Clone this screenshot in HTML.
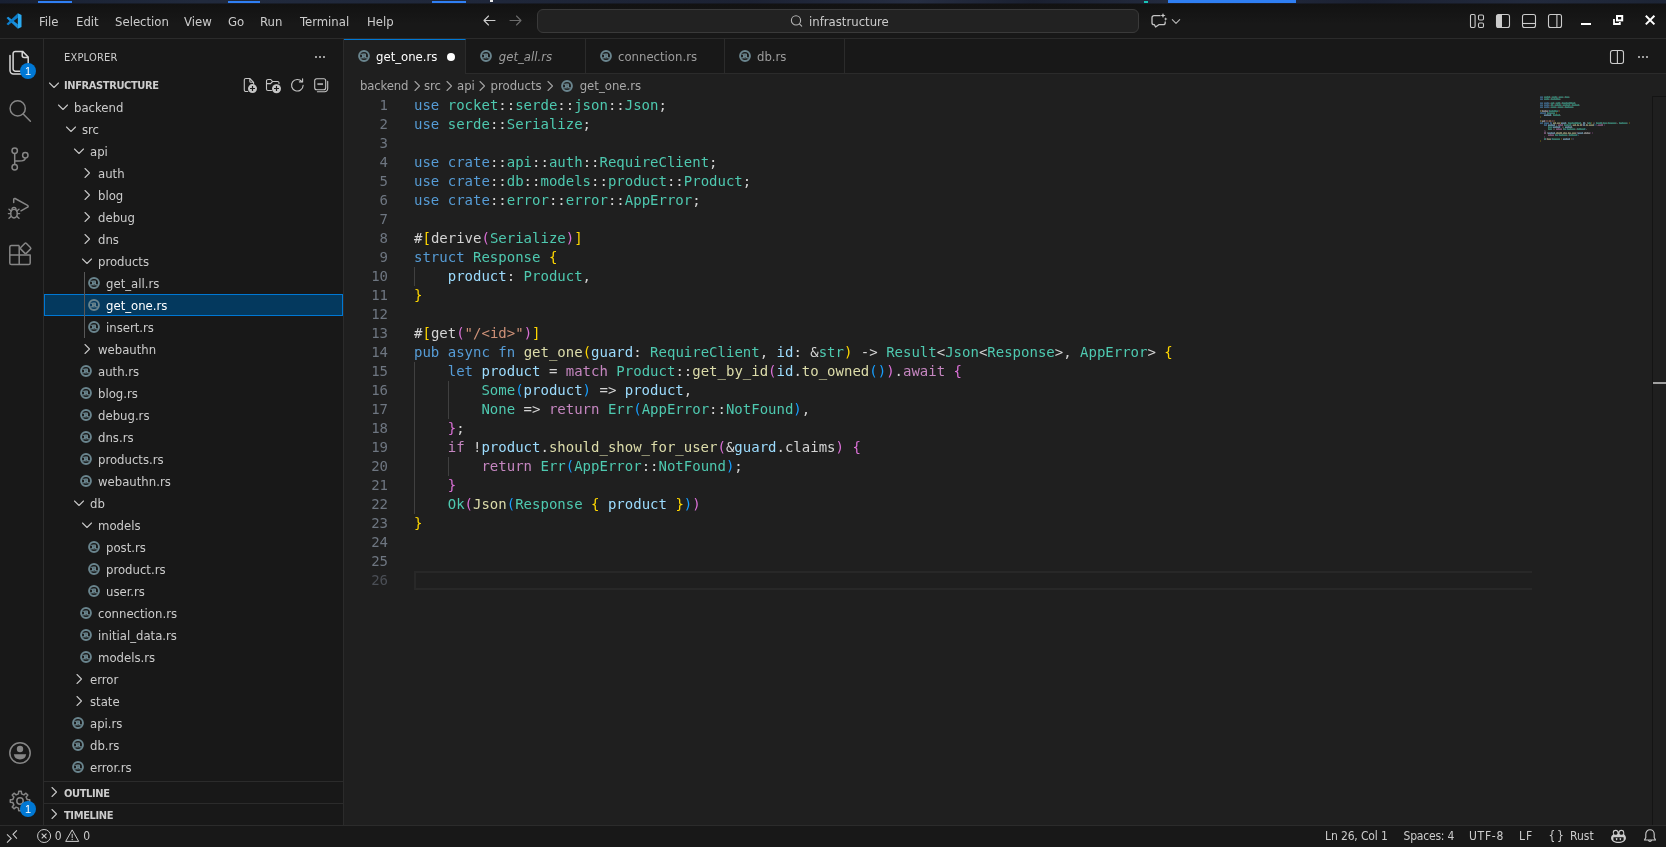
<!DOCTYPE html><html lang="en"><head><meta charset="utf-8"><title>get_one.rs - infrastructure - Visual Studio Code</title><style>
*{box-sizing:border-box;margin:0;padding:0}
html,body{width:1666px;height:847px;overflow:hidden;background:#181818}
body{position:relative;will-change:transform;font-family:"DejaVu Sans Condensed","Liberation Sans",sans-serif;font-size:13px;color:#cccccc;-webkit-font-smoothing:antialiased}
.abs{position:absolute}
svg{display:block;overflow:visible;fill:none}
#desk{left:0;top:0;width:1666px;height:4px;background:linear-gradient(180deg,rgba(0,0,0,0) 0,rgba(0,0,0,0) 2.6px,rgba(16,16,18,.75) 4px),linear-gradient(90deg,#182032,#212a3d 12%,#1f273a 30%,#1c2233 45%,#262e42 55%,#1a2030 62%,#252d41 72%,#1b2132 82%,#222a3d 92%,#1d2536)}
#desk i{position:absolute;top:1px;height:2px;background:#2f7ff3}
#title{left:0;top:4px;width:1666px;height:35px;background:linear-gradient(#121212,#181818 20px);border-bottom:1px solid #2b2b2b}
.menu{position:absolute;top:0;height:36px;line-height:36px;color:#cccccc;font-size:13px;white-space:pre}
#cc{left:537px;top:5px;width:602px;height:24px;border:1px solid #3a3a3a;border-radius:6px;background:#222222}
#act{left:0;top:39px;width:44px;height:786px;background:#181818;border-right:1px solid #2b2b2b}
#side{left:44px;top:39px;width:300px;height:786px;background:#181818;border-right:1px solid #2b2b2b}
#ed{left:344px;top:39px;width:1322px;height:786px;background:#1f1f1f}
#tabs{left:0;top:0;width:1322px;height:35px;background:#181818;border-bottom:1px solid #2b2b2b}
.tab{position:absolute;top:0;height:34px;border-right:1px solid #2b2b2b;background:#181818;color:#9d9d9d;line-height:35px;white-space:pre}
.tab.on{background:#1f1f1f;color:#ffffff;border-top:1px solid #0078d4;height:35px;line-height:33px}
.tab span{position:absolute;top:0}
#status{left:0;top:825px;width:1666px;height:22px;background:#181818;border-top:1px solid #2b2b2b;font-size:12px;color:#cccccc}
#status span{position:absolute;top:0;line-height:20px;white-space:pre}
.row{position:absolute;left:0;width:299px;height:22px;line-height:22px;white-space:pre;color:#cccccc}
.row span{position:absolute;top:1px}
.hdr{font-size:11px;font-weight:700;color:#cccccc;letter-spacing:-.38px}
.ln{position:absolute;left:0;width:44px;text-align:right;font-family:"DejaVu Sans Mono","Liberation Mono",monospace;font-size:14px;line-height:19px;color:#6e7681;height:19px}
.cl{position:absolute;left:70px;font-family:"DejaVu Sans Mono","Liberation Mono",monospace;font-size:14px;line-height:19px;height:19px;white-space:pre;color:#d4d4d4}
.k{color:#569cd6}.c{color:#c586c0}.t{color:#4ec9b0}.f{color:#dcdcaa}.v{color:#9cdcfe}.s{color:#ce9178}
.b1{color:#ffd700}.b2{color:#da70d6}.b3{color:#179fff}
.ig{position:absolute;width:1px;background:#404040}
.bc{position:absolute;top:36px;left:0;height:22px;line-height:22px;color:#a9a9a9;white-space:pre}
.bc span{position:absolute;top:0}
</style></head><body>
<div id="desk" class="abs"><i style="left:38px;width:34px"></i><i style="left:228px;width:32px"></i><i style="left:432px;width:34px"></i><i style="left:1168px;width:128px;top:0;height:3px"></i><i style="left:1144px;width:4px;background:#19c5b5"></i><i style="left:490px;width:3px;top:0;background:#e8e8e8"></i></div>
<div id="title" class="abs"><svg class="abs" style="left:6px;top:9px" width="16" height="16" viewBox="0 0 100 100"><path d="M74 98 L74 70 L14 24 L3 32 Z" fill="#1a8fdc"/><path d="M74 2 L74 30 L14 76 L3 68 Z" fill="#0d7ecb"/><path d="M74 2 L97 13 V87 L74 98 Z" fill="#2aabf2"/></svg><span class="menu" style="left:39px">File</span><span class="menu" style="left:76px">Edit</span><span class="menu" style="left:115px">Selection</span><span class="menu" style="left:184px">View</span><span class="menu" style="left:228px">Go</span><span class="menu" style="left:260px">Run</span><span class="menu" style="left:300px">Terminal</span><span class="menu" style="left:367px">Help</span><svg class="abs" style="left:481px;top:9px" width="16" height="16" viewBox="0 0 16 16"><path d="M14 7.5 H3.5 M7.5 3 L3 7.5 L7.5 12" stroke="#cccccc" stroke-width="1.1" stroke-linecap="round" stroke-linejoin="round"/></svg><svg class="abs" style="left:507px;top:9px" width="16" height="16" viewBox="0 0 16 16"><path d="M3 7.5 H13.5 M9.5 3 L14 7.5 L9.5 12" stroke="#6b6b6b" stroke-width="1.1" stroke-linecap="round" stroke-linejoin="round"/></svg><div id="cc" class="abs"><svg class="abs" style="left:251px;top:3px" width="16" height="16" viewBox="0 0 16 16"><circle cx="7" cy="7.4" r="4.6" stroke="#b4b4b4" stroke-width="1.1"/><path d="M10.4 10.8 L12.7 13.1" stroke="#b4b4b4" stroke-width="1.1" stroke-linecap="round"/></svg><span class="abs" style="left:271px;top:1px;line-height:22px;color:#cccccc;white-space:pre">infrastructure</span></div><svg class="abs" style="left:1150px;top:8px" width="18" height="18" viewBox="0 0 18 18"><path d="M10 3.7 H4 a2 2 0 0 0 -2 2 V10.7 a2 2 0 0 0 2 2 H4.4 L5.6 15 L8.8 12.7 H13.2 a2 2 0 0 0 2 -2 V10" stroke="#c4c4c4" stroke-width="1.3" stroke-linejoin="round" stroke-linecap="round"/><path d="M13 1 L13.7 2.8 L15.5 3.5 L13.7 4.2 L13 6 L12.3 4.2 L10.5 3.5 L12.3 2.8 Z" fill="#cccccc"/><path d="M15.7 5.3 L16.2 6.6 L17.5 7.1 L16.2 7.6 L15.7 8.9 L15.2 7.6 L13.9 7.1 L15.2 6.6 Z" fill="#cccccc"/></svg><svg class="abs" style="left:1170px;top:12px" width="12" height="12" viewBox="0 0 12 12"><path d="M2.3 3.7 L6 7.3 L9.7 3.7" stroke="#b8b8b8" stroke-width="1.1" stroke-linecap="round" stroke-linejoin="round"/></svg><svg class="abs" style="left:1469px;top:9px" width="16" height="16" viewBox="0 0 16 16"><rect x="1.5" y="1.5" width="4.6" height="13" rx="1.2" stroke="#cccccc" stroke-width="1.1"/><rect x="9.5" y="2" width="5" height="5" rx="1.2" stroke="#cccccc" stroke-width="1.1"/><rect x="9.5" y="10" width="5" height="4.5" rx="1.2" stroke="#cccccc" stroke-width="1.1"/></svg><svg class="abs" style="left:1495px;top:9px" width="16" height="16" viewBox="0 0 16 16"><rect x="1.5" y="1.5" width="13" height="13" rx="2" stroke="#cccccc" stroke-width="1.1"/><path d="M1.5 3.5 a2 2 0 0 1 2 -2 H7 V14.5 H3.5 A2 2 0 0 1 1.5 12.5 Z" fill="#cccccc"/></svg><svg class="abs" style="left:1521px;top:9px" width="16" height="16" viewBox="0 0 16 16"><rect x="1.5" y="1.5" width="13" height="13" rx="2" stroke="#cccccc" stroke-width="1.1"/><path d="M1.5 10.5 H14.5" stroke="#cccccc" stroke-width="1.1"/></svg><svg class="abs" style="left:1547px;top:9px" width="16" height="16" viewBox="0 0 16 16"><rect x="1.5" y="1.5" width="13" height="13" rx="2" stroke="#cccccc" stroke-width="1.1"/><path d="M9.9 1.5 V14.5" stroke="#cccccc" stroke-width="1.1"/></svg><div class="abs" style="left:1581px;top:19px;width:10px;height:2px;background:#ffffff"></div><svg class="abs" style="left:1612px;top:10px" width="12" height="12" viewBox="0 0 12 12"><rect x="5" y="2" width="5.2" height="4.4" stroke="#ffffff" stroke-width="2"/><path d="M2 5 V10 H7.8 V8" stroke="#ffffff" stroke-width="1.8"/></svg><svg class="abs" style="left:1644px;top:10px" width="12" height="12" viewBox="0 0 12 12"><path d="M1.8 1.8 L10.4 10.4 M10.4 1.8 L1.8 10.4" stroke="#ffffff" stroke-width="2"/></svg></div>
<div id="act" class="abs"><svg class="abs" style="left:8px;top:11px" width="24" height="26" viewBox="0 0 24 26"><path d="M7.3 1.4 H14.6 L20.2 7 V19 a2.2 2.2 0 0 1 -2.2 2.2 H7.3 a2.2 2.2 0 0 1 -2.2 -2.2 V3.6 a2.2 2.2 0 0 1 2.2 -2.2 Z M14.2 1.6 V5.4 a2 2 0 0 0 2 2 H20" stroke="#d7d7d7" stroke-width="1.5" stroke-linejoin="round"/><path d="M2 5.4 V20.6 a3.4 3.4 0 0 0 3.4 3.4 H15" stroke="#d7d7d7" stroke-width="1.5" stroke-linecap="round"/></svg><div class="abs" style="left:20px;top:24px;width:16px;height:16px;border-radius:8px;background:#0078d4;color:#fff;font-family:'Liberation Sans',sans-serif;font-size:11px;text-align:center;line-height:16px">1</div><svg class="abs" style="left:8px;top:60px" width="24" height="24" viewBox="0 0 24 24"><circle cx="9.7" cy="9.4" r="7.6" stroke="#868686" stroke-width="1.5"/><path d="M15.2 15 L22.4 22.2" stroke="#868686" stroke-width="1.5" stroke-linecap="round"/></svg><svg class="abs" style="left:8px;top:108px" width="24" height="24" viewBox="0 0 24 24"><circle cx="6.7" cy="3.8" r="2.7" stroke="#868686" stroke-width="1.5"/><circle cx="6.7" cy="20.2" r="2.7" stroke="#868686" stroke-width="1.5"/><circle cx="17.3" cy="8.2" r="2.7" stroke="#868686" stroke-width="1.5"/><path d="M6.7 6.5 V17.5 M17.3 10.9 C17.3 14 14 14 11 14 H6.7" stroke="#868686" stroke-width="1.5"/></svg><svg class="abs" style="left:4px;top:154px" width="28" height="28" viewBox="0 0 28 28"><path d="M9.7 9.6 V6.4 a1 1 0 0 1 1.4 -0.9 L23.6 12.4 a1 1 0 0 1 0 1.8 L17 17.8" stroke="#868686" stroke-width="1.5" stroke-linecap="round" stroke-linejoin="round"/><ellipse cx="10" cy="20.6" rx="3.3" ry="4.3" stroke="#868686" stroke-width="1.5"/><path d="M8 16.4 a2 2 0 0 1 4 0 M6.7 20.6 H4.4 M13.3 20.6 H15.6 M7.2 18 L5 16.2 M12.8 18 L15 16.2 M7.2 23.4 L5 25.2 M12.8 23.4 L15 25.2" stroke="#868686" stroke-width="1.4" stroke-linecap="round"/></svg><svg class="abs" style="left:8px;top:203px" width="24" height="24" viewBox="0 0 24 24"><path d="M11.2 3.5 H3.4 a1.6 1.6 0 0 0 -1.6 1.6 V21 a1.6 1.6 0 0 0 1.6 1.6 H20.6 a1.6 1.6 0 0 0 1.6 -1.6 V13 H1.8 M11.2 3.5 V22.6" stroke="#868686" stroke-width="1.5" stroke-linejoin="round"/><rect x="13.6" y="2.3" width="8" height="8" rx="1.2" transform="rotate(45 17.6 6.3)" stroke="#868686" stroke-width="1.5"/></svg><svg class="abs" style="left:8px;top:702px" width="24" height="24" viewBox="0 0 24 24"><circle cx="12" cy="12" r="10.2" stroke="#868686" stroke-width="1.5"/><circle cx="12" cy="8" r="3.2" fill="#868686"/><path d="M5.8 13.2 H18.2 a6.3 6.3 0 0 1 -12.4 0 Z" fill="#868686"/></svg><svg class="abs" style="left:8px;top:750px" width="24" height="24" viewBox="0 0 24 24"><path d="M19.12 10.41 L21.71 10.70 L21.71 13.30 L19.12 13.59 L18.16 15.91 L19.79 17.95 L17.95 19.79 L15.91 18.16 L13.59 19.12 L13.30 21.71 L10.70 21.71 L10.41 19.12 L8.09 18.16 L6.05 19.79 L4.21 17.95 L5.84 15.91 L4.88 13.59 L2.29 13.30 L2.29 10.70 L4.88 10.41 L5.84 8.09 L4.21 6.05 L6.05 4.21 L8.09 5.84 L10.41 4.88 L10.70 2.29 L13.30 2.29 L13.59 4.88 L15.91 5.84 L17.95 4.21 L19.79 6.05 L18.16 8.09 Z" stroke="#868686" stroke-width="1.5" stroke-linejoin="round"/><circle cx="12" cy="12" r="3.2" stroke="#868686" stroke-width="1.5"/></svg><div class="abs" style="left:20px;top:762px;width:16px;height:16px;border-radius:8px;background:#0078d4;color:#fff;font-family:'Liberation Sans',sans-serif;font-size:11px;text-align:center;line-height:16px">1</div></div>
<div id="side" class="abs"><span class="abs" style="left:20px;top:1px;line-height:35px;font-size:11px;letter-spacing:.2px;color:#cccccc;white-space:pre">EXPLORER</span><svg class="abs" style="left:268px;top:10px" width="16" height="16" viewBox="0 0 16 16"><circle cx="4" cy="8" r="1" fill="#cccccc"/><circle cx="8" cy="8" r="1" fill="#cccccc"/><circle cx="12" cy="8" r="1" fill="#cccccc"/></svg><div class="row hdr" style="top:35px"><svg class="abs" style="left:2px;top:3px" width="16" height="16" viewBox="0 0 16 16"><path d="M3.5 6 L8 10.5 L12.5 6" fill="none" stroke="#c5c5c5" stroke-width="1.1" stroke-linecap="round" stroke-linejoin="round"/></svg><span style="left:20px">INFRASTRUCTURE</span><svg class="abs" style="left:198px;top:3px" width="16" height="16" viewBox="0 0 16 16"><path d="M5.8 14.5 H3.8 a1.5 1.5 0 0 1 -1.5 -1.5 V3 A1.5 1.5 0 0 1 3.8 1.5 H7.8 L11.6 5.3 V6.6 M7.8 1.8 V4.3 a1 1 0 0 0 1 1 H11.4" stroke="#c5c5c5" stroke-width="1.1" stroke-linejoin="round" stroke-linecap="round"/><circle cx="10.5" cy="11.6" r="4.5" fill="#c5c5c5"/><path d="M10.5 9 V14 M8 11.5 H13" stroke="#181818" stroke-width="1.2"/></svg><svg class="abs" style="left:221px;top:3px" width="16" height="16" viewBox="0 0 16 16"><path d="M6.5 13.5 H3 a1.5 1.5 0 0 1 -1.5 -1.5 V4 A1.5 1.5 0 0 1 3 2.5 H5.8 L7.6 4.5 H12.5 A1.5 1.5 0 0 1 14 6 V6.6 M1.5 6.6 H5.6 L7.6 4.5" stroke="#c5c5c5" stroke-width="1.1" stroke-linejoin="round" stroke-linecap="round"/><circle cx="11.5" cy="11.7" r="4.5" fill="#c5c5c5"/><path d="M11.5 9 V14 M9 11.5 H14" stroke="#181818" stroke-width="1.2"/></svg><svg class="abs" style="left:245px;top:3px" width="16" height="16" viewBox="0 0 16 16"><path d="M12.9 4.7 A5.8 5.8 0 1 0 14.1 8.4" stroke="#c5c5c5" stroke-width="1.1" stroke-linecap="round"/><path d="M13.6 1.7 V4.9 H10.4" stroke="#c5c5c5" stroke-width="1.1" stroke-linecap="round" stroke-linejoin="round"/></svg><svg class="abs" style="left:269px;top:3px" width="16" height="16" viewBox="0 0 16 16"><rect x="1.7" y="1.7" width="11" height="11" rx="2" stroke="#c5c5c5" stroke-width="1.1"/><path d="M4.4 7.1 H10" stroke="#a0a0a0" stroke-width="1.9"/><path d="M14.7 4.4 V11.7 a3 3 0 0 1 -3 3 H4.4" stroke="#c5c5c5" stroke-width="1.1" stroke-linecap="round"/></svg></div><div class="row" style="top:57px"><svg class="abs" style="left:11px;top:3px" width="16" height="16" viewBox="0 0 16 16"><path d="M3.5 6 L8 10.5 L12.5 6" fill="none" stroke="#c5c5c5" stroke-width="1.1" stroke-linecap="round" stroke-linejoin="round"/></svg><span style="left:30px">backend</span></div><div class="row" style="top:79px"><svg class="abs" style="left:19px;top:3px" width="16" height="16" viewBox="0 0 16 16"><path d="M3.5 6 L8 10.5 L12.5 6" fill="none" stroke="#c5c5c5" stroke-width="1.1" stroke-linecap="round" stroke-linejoin="round"/></svg><span style="left:38px">src</span></div><div class="row" style="top:101px"><svg class="abs" style="left:27px;top:3px" width="16" height="16" viewBox="0 0 16 16"><path d="M3.5 6 L8 10.5 L12.5 6" fill="none" stroke="#c5c5c5" stroke-width="1.1" stroke-linecap="round" stroke-linejoin="round"/></svg><span style="left:46px">api</span></div><div class="row" style="top:123px"><svg class="abs" style="left:35px;top:3px" width="16" height="16" viewBox="0 0 16 16"><path d="M6 3.5 L10.5 8 L6 12.5" fill="none" stroke="#c5c5c5" stroke-width="1.1" stroke-linecap="round" stroke-linejoin="round"/></svg><span style="left:54px">auth</span></div><div class="row" style="top:145px"><svg class="abs" style="left:35px;top:3px" width="16" height="16" viewBox="0 0 16 16"><path d="M6 3.5 L10.5 8 L6 12.5" fill="none" stroke="#c5c5c5" stroke-width="1.1" stroke-linecap="round" stroke-linejoin="round"/></svg><span style="left:54px">blog</span></div><div class="row" style="top:167px"><svg class="abs" style="left:35px;top:3px" width="16" height="16" viewBox="0 0 16 16"><path d="M6 3.5 L10.5 8 L6 12.5" fill="none" stroke="#c5c5c5" stroke-width="1.1" stroke-linecap="round" stroke-linejoin="round"/></svg><span style="left:54px">debug</span></div><div class="row" style="top:189px"><svg class="abs" style="left:35px;top:3px" width="16" height="16" viewBox="0 0 16 16"><path d="M6 3.5 L10.5 8 L6 12.5" fill="none" stroke="#c5c5c5" stroke-width="1.1" stroke-linecap="round" stroke-linejoin="round"/></svg><span style="left:54px">dns</span></div><div class="row" style="top:211px"><svg class="abs" style="left:35px;top:3px" width="16" height="16" viewBox="0 0 16 16"><path d="M3.5 6 L8 10.5 L12.5 6" fill="none" stroke="#c5c5c5" stroke-width="1.1" stroke-linecap="round" stroke-linejoin="round"/></svg><span style="left:54px">products</span></div><div class="row" style="top:233px"><svg class="abs" style="left:43px;top:4px" width="14" height="14" viewBox="0 0 14 14"><circle cx="7" cy="7" r="4.95" fill="none" stroke="#6a858e" stroke-width="1.9"/><path d="M3.2 8.9 H5 M9 8.9 H10.8 M3.4 5.2 H5" stroke="#6a858e" stroke-width="1.1"/><rect x="5" y="4.5" width="4" height="4.9" rx=".9" fill="#6a858e"/><path d="M7.2 9.5 V8.1 M6.6 6.1 H7.4" stroke="#181818" stroke-width=".8" opacity=".85"/></svg><span style="left:62px">get_all.rs</span></div><div class="row" style="top:255px;background:#04395e;outline:1px solid #0078d4;outline-offset:-1px;color:#ffffff"><svg class="abs" style="left:43px;top:4px" width="14" height="14" viewBox="0 0 14 14"><circle cx="7" cy="7" r="4.95" fill="none" stroke="#6a858e" stroke-width="1.9"/><path d="M3.2 8.9 H5 M9 8.9 H10.8 M3.4 5.2 H5" stroke="#6a858e" stroke-width="1.1"/><rect x="5" y="4.5" width="4" height="4.9" rx=".9" fill="#6a858e"/><path d="M7.2 9.5 V8.1 M6.6 6.1 H7.4" stroke="#04395e" stroke-width=".8" opacity=".85"/></svg><span style="left:62px">get_one.rs</span></div><div class="row" style="top:277px"><svg class="abs" style="left:43px;top:4px" width="14" height="14" viewBox="0 0 14 14"><circle cx="7" cy="7" r="4.95" fill="none" stroke="#6a858e" stroke-width="1.9"/><path d="M3.2 8.9 H5 M9 8.9 H10.8 M3.4 5.2 H5" stroke="#6a858e" stroke-width="1.1"/><rect x="5" y="4.5" width="4" height="4.9" rx=".9" fill="#6a858e"/><path d="M7.2 9.5 V8.1 M6.6 6.1 H7.4" stroke="#181818" stroke-width=".8" opacity=".85"/></svg><span style="left:62px">insert.rs</span></div><div class="row" style="top:299px"><svg class="abs" style="left:35px;top:3px" width="16" height="16" viewBox="0 0 16 16"><path d="M6 3.5 L10.5 8 L6 12.5" fill="none" stroke="#c5c5c5" stroke-width="1.1" stroke-linecap="round" stroke-linejoin="round"/></svg><span style="left:54px">webauthn</span></div><div class="row" style="top:321px"><svg class="abs" style="left:35px;top:4px" width="14" height="14" viewBox="0 0 14 14"><circle cx="7" cy="7" r="4.95" fill="none" stroke="#6a858e" stroke-width="1.9"/><path d="M3.2 8.9 H5 M9 8.9 H10.8 M3.4 5.2 H5" stroke="#6a858e" stroke-width="1.1"/><rect x="5" y="4.5" width="4" height="4.9" rx=".9" fill="#6a858e"/><path d="M7.2 9.5 V8.1 M6.6 6.1 H7.4" stroke="#181818" stroke-width=".8" opacity=".85"/></svg><span style="left:54px">auth.rs</span></div><div class="row" style="top:343px"><svg class="abs" style="left:35px;top:4px" width="14" height="14" viewBox="0 0 14 14"><circle cx="7" cy="7" r="4.95" fill="none" stroke="#6a858e" stroke-width="1.9"/><path d="M3.2 8.9 H5 M9 8.9 H10.8 M3.4 5.2 H5" stroke="#6a858e" stroke-width="1.1"/><rect x="5" y="4.5" width="4" height="4.9" rx=".9" fill="#6a858e"/><path d="M7.2 9.5 V8.1 M6.6 6.1 H7.4" stroke="#181818" stroke-width=".8" opacity=".85"/></svg><span style="left:54px">blog.rs</span></div><div class="row" style="top:365px"><svg class="abs" style="left:35px;top:4px" width="14" height="14" viewBox="0 0 14 14"><circle cx="7" cy="7" r="4.95" fill="none" stroke="#6a858e" stroke-width="1.9"/><path d="M3.2 8.9 H5 M9 8.9 H10.8 M3.4 5.2 H5" stroke="#6a858e" stroke-width="1.1"/><rect x="5" y="4.5" width="4" height="4.9" rx=".9" fill="#6a858e"/><path d="M7.2 9.5 V8.1 M6.6 6.1 H7.4" stroke="#181818" stroke-width=".8" opacity=".85"/></svg><span style="left:54px">debug.rs</span></div><div class="row" style="top:387px"><svg class="abs" style="left:35px;top:4px" width="14" height="14" viewBox="0 0 14 14"><circle cx="7" cy="7" r="4.95" fill="none" stroke="#6a858e" stroke-width="1.9"/><path d="M3.2 8.9 H5 M9 8.9 H10.8 M3.4 5.2 H5" stroke="#6a858e" stroke-width="1.1"/><rect x="5" y="4.5" width="4" height="4.9" rx=".9" fill="#6a858e"/><path d="M7.2 9.5 V8.1 M6.6 6.1 H7.4" stroke="#181818" stroke-width=".8" opacity=".85"/></svg><span style="left:54px">dns.rs</span></div><div class="row" style="top:409px"><svg class="abs" style="left:35px;top:4px" width="14" height="14" viewBox="0 0 14 14"><circle cx="7" cy="7" r="4.95" fill="none" stroke="#6a858e" stroke-width="1.9"/><path d="M3.2 8.9 H5 M9 8.9 H10.8 M3.4 5.2 H5" stroke="#6a858e" stroke-width="1.1"/><rect x="5" y="4.5" width="4" height="4.9" rx=".9" fill="#6a858e"/><path d="M7.2 9.5 V8.1 M6.6 6.1 H7.4" stroke="#181818" stroke-width=".8" opacity=".85"/></svg><span style="left:54px">products.rs</span></div><div class="row" style="top:431px"><svg class="abs" style="left:35px;top:4px" width="14" height="14" viewBox="0 0 14 14"><circle cx="7" cy="7" r="4.95" fill="none" stroke="#6a858e" stroke-width="1.9"/><path d="M3.2 8.9 H5 M9 8.9 H10.8 M3.4 5.2 H5" stroke="#6a858e" stroke-width="1.1"/><rect x="5" y="4.5" width="4" height="4.9" rx=".9" fill="#6a858e"/><path d="M7.2 9.5 V8.1 M6.6 6.1 H7.4" stroke="#181818" stroke-width=".8" opacity=".85"/></svg><span style="left:54px">webauthn.rs</span></div><div class="row" style="top:453px"><svg class="abs" style="left:27px;top:3px" width="16" height="16" viewBox="0 0 16 16"><path d="M3.5 6 L8 10.5 L12.5 6" fill="none" stroke="#c5c5c5" stroke-width="1.1" stroke-linecap="round" stroke-linejoin="round"/></svg><span style="left:46px">db</span></div><div class="row" style="top:475px"><svg class="abs" style="left:35px;top:3px" width="16" height="16" viewBox="0 0 16 16"><path d="M3.5 6 L8 10.5 L12.5 6" fill="none" stroke="#c5c5c5" stroke-width="1.1" stroke-linecap="round" stroke-linejoin="round"/></svg><span style="left:54px">models</span></div><div class="row" style="top:497px"><svg class="abs" style="left:43px;top:4px" width="14" height="14" viewBox="0 0 14 14"><circle cx="7" cy="7" r="4.95" fill="none" stroke="#6a858e" stroke-width="1.9"/><path d="M3.2 8.9 H5 M9 8.9 H10.8 M3.4 5.2 H5" stroke="#6a858e" stroke-width="1.1"/><rect x="5" y="4.5" width="4" height="4.9" rx=".9" fill="#6a858e"/><path d="M7.2 9.5 V8.1 M6.6 6.1 H7.4" stroke="#181818" stroke-width=".8" opacity=".85"/></svg><span style="left:62px">post.rs</span></div><div class="row" style="top:519px"><svg class="abs" style="left:43px;top:4px" width="14" height="14" viewBox="0 0 14 14"><circle cx="7" cy="7" r="4.95" fill="none" stroke="#6a858e" stroke-width="1.9"/><path d="M3.2 8.9 H5 M9 8.9 H10.8 M3.4 5.2 H5" stroke="#6a858e" stroke-width="1.1"/><rect x="5" y="4.5" width="4" height="4.9" rx=".9" fill="#6a858e"/><path d="M7.2 9.5 V8.1 M6.6 6.1 H7.4" stroke="#181818" stroke-width=".8" opacity=".85"/></svg><span style="left:62px">product.rs</span></div><div class="row" style="top:541px"><svg class="abs" style="left:43px;top:4px" width="14" height="14" viewBox="0 0 14 14"><circle cx="7" cy="7" r="4.95" fill="none" stroke="#6a858e" stroke-width="1.9"/><path d="M3.2 8.9 H5 M9 8.9 H10.8 M3.4 5.2 H5" stroke="#6a858e" stroke-width="1.1"/><rect x="5" y="4.5" width="4" height="4.9" rx=".9" fill="#6a858e"/><path d="M7.2 9.5 V8.1 M6.6 6.1 H7.4" stroke="#181818" stroke-width=".8" opacity=".85"/></svg><span style="left:62px">user.rs</span></div><div class="row" style="top:563px"><svg class="abs" style="left:35px;top:4px" width="14" height="14" viewBox="0 0 14 14"><circle cx="7" cy="7" r="4.95" fill="none" stroke="#6a858e" stroke-width="1.9"/><path d="M3.2 8.9 H5 M9 8.9 H10.8 M3.4 5.2 H5" stroke="#6a858e" stroke-width="1.1"/><rect x="5" y="4.5" width="4" height="4.9" rx=".9" fill="#6a858e"/><path d="M7.2 9.5 V8.1 M6.6 6.1 H7.4" stroke="#181818" stroke-width=".8" opacity=".85"/></svg><span style="left:54px">connection.rs</span></div><div class="row" style="top:585px"><svg class="abs" style="left:35px;top:4px" width="14" height="14" viewBox="0 0 14 14"><circle cx="7" cy="7" r="4.95" fill="none" stroke="#6a858e" stroke-width="1.9"/><path d="M3.2 8.9 H5 M9 8.9 H10.8 M3.4 5.2 H5" stroke="#6a858e" stroke-width="1.1"/><rect x="5" y="4.5" width="4" height="4.9" rx=".9" fill="#6a858e"/><path d="M7.2 9.5 V8.1 M6.6 6.1 H7.4" stroke="#181818" stroke-width=".8" opacity=".85"/></svg><span style="left:54px">initial_data.rs</span></div><div class="row" style="top:607px"><svg class="abs" style="left:35px;top:4px" width="14" height="14" viewBox="0 0 14 14"><circle cx="7" cy="7" r="4.95" fill="none" stroke="#6a858e" stroke-width="1.9"/><path d="M3.2 8.9 H5 M9 8.9 H10.8 M3.4 5.2 H5" stroke="#6a858e" stroke-width="1.1"/><rect x="5" y="4.5" width="4" height="4.9" rx=".9" fill="#6a858e"/><path d="M7.2 9.5 V8.1 M6.6 6.1 H7.4" stroke="#181818" stroke-width=".8" opacity=".85"/></svg><span style="left:54px">models.rs</span></div><div class="row" style="top:629px"><svg class="abs" style="left:27px;top:3px" width="16" height="16" viewBox="0 0 16 16"><path d="M6 3.5 L10.5 8 L6 12.5" fill="none" stroke="#c5c5c5" stroke-width="1.1" stroke-linecap="round" stroke-linejoin="round"/></svg><span style="left:46px">error</span></div><div class="row" style="top:651px"><svg class="abs" style="left:27px;top:3px" width="16" height="16" viewBox="0 0 16 16"><path d="M6 3.5 L10.5 8 L6 12.5" fill="none" stroke="#c5c5c5" stroke-width="1.1" stroke-linecap="round" stroke-linejoin="round"/></svg><span style="left:46px">state</span></div><div class="row" style="top:673px"><svg class="abs" style="left:27px;top:4px" width="14" height="14" viewBox="0 0 14 14"><circle cx="7" cy="7" r="4.95" fill="none" stroke="#6a858e" stroke-width="1.9"/><path d="M3.2 8.9 H5 M9 8.9 H10.8 M3.4 5.2 H5" stroke="#6a858e" stroke-width="1.1"/><rect x="5" y="4.5" width="4" height="4.9" rx=".9" fill="#6a858e"/><path d="M7.2 9.5 V8.1 M6.6 6.1 H7.4" stroke="#181818" stroke-width=".8" opacity=".85"/></svg><span style="left:46px">api.rs</span></div><div class="row" style="top:695px"><svg class="abs" style="left:27px;top:4px" width="14" height="14" viewBox="0 0 14 14"><circle cx="7" cy="7" r="4.95" fill="none" stroke="#6a858e" stroke-width="1.9"/><path d="M3.2 8.9 H5 M9 8.9 H10.8 M3.4 5.2 H5" stroke="#6a858e" stroke-width="1.1"/><rect x="5" y="4.5" width="4" height="4.9" rx=".9" fill="#6a858e"/><path d="M7.2 9.5 V8.1 M6.6 6.1 H7.4" stroke="#181818" stroke-width=".8" opacity=".85"/></svg><span style="left:46px">db.rs</span></div><div class="row" style="top:717px"><svg class="abs" style="left:27px;top:4px" width="14" height="14" viewBox="0 0 14 14"><circle cx="7" cy="7" r="4.95" fill="none" stroke="#6a858e" stroke-width="1.9"/><path d="M3.2 8.9 H5 M9 8.9 H10.8 M3.4 5.2 H5" stroke="#6a858e" stroke-width="1.1"/><rect x="5" y="4.5" width="4" height="4.9" rx=".9" fill="#6a858e"/><path d="M7.2 9.5 V8.1 M6.6 6.1 H7.4" stroke="#181818" stroke-width=".8" opacity=".85"/></svg><span style="left:46px">error.rs</span></div><div class="abs" style="left:40px;top:233px;width:1px;height:66px;background:#585858"></div><div class="row hdr" style="top:742px;border-top:1px solid #2b2b2b"><svg class="abs" style="left:2px;top:2px" width="16" height="16" viewBox="0 0 16 16"><path d="M6 3.5 L10.5 8 L6 12.5" fill="none" stroke="#c5c5c5" stroke-width="1.1" stroke-linecap="round" stroke-linejoin="round"/></svg><span style="left:20px;top:1px">OUTLINE</span></div><div class="row hdr" style="top:764px;border-top:1px solid #2b2b2b"><svg class="abs" style="left:2px;top:2px" width="16" height="16" viewBox="0 0 16 16"><path d="M6 3.5 L10.5 8 L6 12.5" fill="none" stroke="#c5c5c5" stroke-width="1.1" stroke-linecap="round" stroke-linejoin="round"/></svg><span style="left:20px;top:1px">TIMELINE</span></div></div>
<div id="ed" class="abs"><div id="tabs" class="abs"></div><div class="tab on" style="left:0px;width:122px"><svg class="abs" style="left:12.5px;top:9px" width="14" height="14" viewBox="0 0 14 14"><circle cx="7" cy="7" r="4.95" fill="none" stroke="#6a858e" stroke-width="1.9"/><path d="M3.2 8.9 H5 M9 8.9 H10.8 M3.4 5.2 H5" stroke="#6a858e" stroke-width="1.1"/><rect x="5" y="4.5" width="4" height="4.9" rx=".9" fill="#6a858e"/><path d="M7.2 9.5 V8.1 M6.6 6.1 H7.4" stroke="#1f1f1f" stroke-width=".8" opacity=".85"/></svg><span style="left:32px;">get_one.rs</span><div class="abs" style="left:103px;top:13px;width:8px;height:8px;border-radius:4px;background:#ffffff"></div></div><div class="tab" style="left:122px;width:120px"><svg class="abs" style="left:12.5px;top:10px" width="14" height="14" viewBox="0 0 14 14"><circle cx="7" cy="7" r="4.95" fill="none" stroke="#6a858e" stroke-width="1.9"/><path d="M3.2 8.9 H5 M9 8.9 H10.8 M3.4 5.2 H5" stroke="#6a858e" stroke-width="1.1"/><rect x="5" y="4.5" width="4" height="4.9" rx=".9" fill="#6a858e"/><path d="M7.2 9.5 V8.1 M6.6 6.1 H7.4" stroke="#181818" stroke-width=".8" opacity=".85"/></svg><span style="left:32.8px;font-style:italic;">get_all.rs</span></div><div class="tab" style="left:242px;width:139px"><svg class="abs" style="left:12.5px;top:10px" width="14" height="14" viewBox="0 0 14 14"><circle cx="7" cy="7" r="4.95" fill="none" stroke="#6a858e" stroke-width="1.9"/><path d="M3.2 8.9 H5 M9 8.9 H10.8 M3.4 5.2 H5" stroke="#6a858e" stroke-width="1.1"/><rect x="5" y="4.5" width="4" height="4.9" rx=".9" fill="#6a858e"/><path d="M7.2 9.5 V8.1 M6.6 6.1 H7.4" stroke="#181818" stroke-width=".8" opacity=".85"/></svg><span style="left:32px;">connection.rs</span></div><div class="tab" style="left:381px;width:120px"><svg class="abs" style="left:12.5px;top:10px" width="14" height="14" viewBox="0 0 14 14"><circle cx="7" cy="7" r="4.95" fill="none" stroke="#6a858e" stroke-width="1.9"/><path d="M3.2 8.9 H5 M9 8.9 H10.8 M3.4 5.2 H5" stroke="#6a858e" stroke-width="1.1"/><rect x="5" y="4.5" width="4" height="4.9" rx=".9" fill="#6a858e"/><path d="M7.2 9.5 V8.1 M6.6 6.1 H7.4" stroke="#181818" stroke-width=".8" opacity=".85"/></svg><span style="left:32px;">db.rs</span></div><svg class="abs" style="left:1265px;top:10px" width="16" height="16" viewBox="0 0 16 16"><rect x="1.5" y="1.5" width="13" height="13" rx="2.2" stroke="#cccccc" stroke-width="1.1"/><path d="M8.4 1.5 V14.5" stroke="#cccccc" stroke-width="1.1"/></svg><svg class="abs" style="left:1291px;top:10px" width="16" height="16" viewBox="0 0 16 16"><circle cx="4" cy="8" r="1" fill="#cccccc"/><circle cx="8" cy="8" r="1" fill="#cccccc"/><circle cx="12" cy="8" r="1" fill="#cccccc"/></svg><div class="bc"><span style="left:16px;letter-spacing:-0.15px">backend</span><span style="left:80px;letter-spacing:0px">src</span><span style="left:113px;letter-spacing:0px">api</span><span style="left:146.6px;letter-spacing:0px">products</span><svg class="abs" style="left:64.5px;top:3px" width="16" height="16" viewBox="0 0 16 16"><path d="M6 3.5 L10.5 8 L6 12.5" fill="none" stroke="#a0a0a0" stroke-width="1.1" stroke-linecap="round" stroke-linejoin="round"/></svg><svg class="abs" style="left:96.8px;top:3px" width="16" height="16" viewBox="0 0 16 16"><path d="M6 3.5 L10.5 8 L6 12.5" fill="none" stroke="#a0a0a0" stroke-width="1.1" stroke-linecap="round" stroke-linejoin="round"/></svg><svg class="abs" style="left:130.3px;top:3px" width="16" height="16" viewBox="0 0 16 16"><path d="M6 3.5 L10.5 8 L6 12.5" fill="none" stroke="#a0a0a0" stroke-width="1.1" stroke-linecap="round" stroke-linejoin="round"/></svg><svg class="abs" style="left:197.6px;top:3px" width="16" height="16" viewBox="0 0 16 16"><path d="M6 3.5 L10.5 8 L6 12.5" fill="none" stroke="#a0a0a0" stroke-width="1.1" stroke-linecap="round" stroke-linejoin="round"/></svg><svg class="abs" style="left:216.4px;top:4px" width="14" height="14" viewBox="0 0 14 14"><circle cx="7" cy="7" r="4.95" fill="none" stroke="#6a858e" stroke-width="1.9"/><path d="M3.2 8.9 H5 M9 8.9 H10.8 M3.4 5.2 H5" stroke="#6a858e" stroke-width="1.1"/><rect x="5" y="4.5" width="4" height="4.9" rx=".9" fill="#6a858e"/><path d="M7.2 9.5 V8.1 M6.6 6.1 H7.4" stroke="#1f1f1f" stroke-width=".8" opacity=".85"/></svg><span style="left:235.7px">get_one.rs</span></div><div class="abs" style="left:70px;top:532px;width:1118px;height:19px;border:2px solid #282828;border-right:none"></div><div class="ln" style="top:57px">1</div><div class="cl" style="top:57px"><span class="k">use</span> <span class="t">rocket</span>::<span class="t">serde</span>::<span class="t">json</span>::<span class="t">Json</span>;</div><div class="ln" style="top:76px">2</div><div class="cl" style="top:76px"><span class="k">use</span> <span class="t">serde</span>::<span class="t">Serialize</span>;</div><div class="ln" style="top:95px">3</div><div class="ln" style="top:114px">4</div><div class="cl" style="top:114px"><span class="k">use</span> <span class="k">crate</span>::<span class="t">api</span>::<span class="t">auth</span>::<span class="t">RequireClient</span>;</div><div class="ln" style="top:133px">5</div><div class="cl" style="top:133px"><span class="k">use</span> <span class="k">crate</span>::<span class="t">db</span>::<span class="t">models</span>::<span class="t">product</span>::<span class="t">Product</span>;</div><div class="ln" style="top:152px">6</div><div class="cl" style="top:152px"><span class="k">use</span> <span class="k">crate</span>::<span class="t">error</span>::<span class="t">error</span>::<span class="t">AppError</span>;</div><div class="ln" style="top:171px">7</div><div class="ln" style="top:190px">8</div><div class="cl" style="top:190px">#<span class="b1">[</span>derive<span class="b2">(</span><span class="t">Serialize</span><span class="b2">)</span><span class="b1">]</span></div><div class="ln" style="top:209px">9</div><div class="cl" style="top:209px"><span class="k">struct</span> <span class="t">Response</span> <span class="b1">{</span></div><div class="ln" style="top:228px">10</div><div class="cl" style="top:228px">    <span class="v">product</span>: <span class="t">Product</span>,</div><div class="ln" style="top:247px">11</div><div class="cl" style="top:247px"><span class="b1">}</span></div><div class="ln" style="top:266px">12</div><div class="ln" style="top:285px">13</div><div class="cl" style="top:285px">#<span class="b1">[</span>get<span class="b2">(</span><span class="s">"/&lt;id&gt;"</span><span class="b2">)</span><span class="b1">]</span></div><div class="ln" style="top:304px">14</div><div class="cl" style="top:304px"><span class="k">pub</span> <span class="k">async</span> <span class="k">fn</span> <span class="f">get_one</span><span class="b1">(</span><span class="v">guard</span>: <span class="t">RequireClient</span>, <span class="v">id</span>: &amp;<span class="t">str</span><span class="b1">)</span> -&gt; <span class="t">Result</span>&lt;<span class="t">Json</span>&lt;<span class="t">Response</span>&gt;, <span class="t">AppError</span>&gt; <span class="b1">{</span></div><div class="ln" style="top:323px">15</div><div class="cl" style="top:323px">    <span class="k">let</span> <span class="v">product</span> = <span class="c">match</span> <span class="t">Product</span>::<span class="f">get_by_id</span><span class="b2">(</span><span class="v">id</span>.<span class="f">to_owned</span><span class="b3">(</span><span class="b3">)</span><span class="b2">)</span>.<span class="c">await</span> <span class="b2">{</span></div><div class="ln" style="top:342px">16</div><div class="cl" style="top:342px">        <span class="t">Some</span><span class="b3">(</span><span class="v">product</span><span class="b3">)</span> =&gt; <span class="v">product</span>,</div><div class="ln" style="top:361px">17</div><div class="cl" style="top:361px">        <span class="t">None</span> =&gt; <span class="c">return</span> <span class="t">Err</span><span class="b3">(</span><span class="t">AppError</span>::<span class="t">NotFound</span><span class="b3">)</span>,</div><div class="ln" style="top:380px">18</div><div class="cl" style="top:380px">    <span class="b2">}</span>;</div><div class="ln" style="top:399px">19</div><div class="cl" style="top:399px">    <span class="c">if</span> !<span class="v">product</span>.<span class="f">should_show_for_user</span><span class="b2">(</span>&amp;<span class="v">guard</span>.claims<span class="b2">)</span> <span class="b2">{</span></div><div class="ln" style="top:418px">20</div><div class="cl" style="top:418px">        <span class="c">return</span> <span class="t">Err</span><span class="b3">(</span><span class="t">AppError</span>::<span class="t">NotFound</span><span class="b3">)</span>;</div><div class="ln" style="top:437px">21</div><div class="cl" style="top:437px">    <span class="b2">}</span></div><div class="ln" style="top:456px">22</div><div class="cl" style="top:456px">    <span class="t">Ok</span><span class="b2">(</span><span class="f">Json</span><span class="b3">(</span><span class="t">Response</span> <span class="b1">{</span> <span class="v">product</span> <span class="b1">}</span><span class="b3">)</span><span class="b2">)</span></div><div class="ln" style="top:475px">23</div><div class="cl" style="top:475px"><span class="b1">}</span></div><div class="ln" style="top:494px">24</div><div class="ln" style="top:513px">25</div><div class="ln" style="top:532px;color:#4b4f56">26</div><div class="ig" style="left:70px;top:228px;height:19px;background:#404040"></div><div class="ig" style="left:70px;top:323px;height:152px;background:#404040"></div><div class="ig" style="left:104px;top:342px;height:38px;background:#404040"></div><div class="ig" style="left:104px;top:418px;height:19px;background:#404040"></div><svg class="abs" style="left:1196px;top:57px" width="112" height="60" viewBox="0 0 112 60" shape-rendering="crispEdges"><path d="M0 0.5h3M0 2.5h3M0 6.5h3M4 6.5h3M8 6.5h1M0 8.5h3M4 8.5h3M8 8.5h1M0 10.5h3M4 10.5h3M8 10.5h1M0 16.5h1M2 16.5h3M0 26.5h2M4 26.5h5M11 26.5h1M5 28.5h1" stroke="#569cd6" stroke-opacity="0.3" stroke-width="1"/><path d="M0 1.5h3M0 3.5h3M0 7.5h3M4 7.5h5M0 9.5h3M4 9.5h5M0 11.5h3M4 11.5h5M0 17.5h6M1 27.5h2M4 27.5h2M7 27.5h2M10 27.5h2M4 29.5h3" stroke="#569cd6" stroke-opacity="0.5" stroke-width="1"/><path d="M4 0.5h3M8 0.5h1M12 0.5h3M16 0.5h1M19 0.5h4M26 0.5h3M4 2.5h3M8 2.5h1M12 2.5h2M15 2.5h1M18 2.5h2M11 6.5h2M16 6.5h2M23 6.5h3M27 6.5h2M32 6.5h2M15 8.5h2M18 8.5h1M20 8.5h1M23 8.5h3M27 8.5h2M33 8.5h2M36 8.5h2M11 10.5h5M18 10.5h5M26 10.5h2M29 10.5h4M10 14.5h2M13 14.5h1M16 14.5h2M8 16.5h7M14 18.5h2M17 18.5h2M29 26.5h3M33 26.5h2M38 26.5h2M48 26.5h1M50 26.5h1M57 26.5h3M64 26.5h3M69 26.5h7M80 26.5h2M83 26.5h4M25 28.5h2M28 28.5h2M9 30.5h3M9 32.5h3M24 32.5h2M28 32.5h2M31 32.5h4M38 32.5h1M41 32.5h3M16 38.5h2M20 38.5h2M23 38.5h4M30 38.5h1M33 38.5h3M13 42.5h7" stroke="#4ec9b0" stroke-opacity="0.3" stroke-width="1"/><path d="M4 1.5h6M12 1.5h5M20 1.5h3M25 1.5h4M4 3.5h5M11 3.5h9M11 7.5h1M13 7.5h1M16 7.5h4M22 7.5h2M25 7.5h10M11 9.5h2M15 9.5h6M24 9.5h6M32 9.5h7M11 11.5h5M18 11.5h5M25 11.5h1M28 11.5h5M9 15.5h9M7 17.5h3M11 17.5h4M13 19.5h7M28 27.5h2M31 27.5h10M48 27.5h3M56 27.5h6M63 27.5h4M68 27.5h3M72 27.5h4M79 27.5h1M82 27.5h5M24 29.5h7M8 31.5h4M8 33.5h4M23 33.5h3M27 33.5h1M30 33.5h5M37 33.5h8M15 39.5h3M19 39.5h1M22 39.5h5M29 39.5h8M4 43.5h2M12 43.5h3M16 43.5h4" stroke="#4ec9b0" stroke-opacity="0.5" stroke-width="1"/><path d="M7 0.5h1M9 0.5h1M15 0.5h1M25 0.5h1M7 2.5h1M11 2.5h1M14 2.5h1M16 2.5h2M13 6.5h1M18 6.5h2M22 6.5h1M26 6.5h1M29 6.5h3M34 6.5h1M11 8.5h2M17 8.5h1M19 8.5h1M26 8.5h1M29 8.5h1M32 8.5h1M35 8.5h1M38 8.5h1M25 10.5h1M28 10.5h1M9 14.5h1M12 14.5h1M14 14.5h2M7 16.5h1M13 18.5h1M16 18.5h1M19 18.5h1M28 26.5h1M32 26.5h1M35 26.5h3M40 26.5h1M49 26.5h1M56 26.5h1M60 26.5h2M63 26.5h1M68 26.5h1M79 26.5h1M82 26.5h1M24 28.5h1M27 28.5h1M30 28.5h1M8 30.5h1M8 32.5h1M23 32.5h1M27 32.5h1M30 32.5h1M37 32.5h1M39 32.5h2M44 32.5h1M15 38.5h1M19 38.5h1M22 38.5h1M29 38.5h1M31 38.5h2M36 38.5h1M4 42.5h2M12 42.5h1" stroke="#4ec9b0" stroke-opacity="0.45" stroke-width="1"/><path d="M10 0.5h2M17 0.5h2M23 0.5h2M29 0.5h1M9 2.5h2M20 2.5h1M9 6.5h2M14 6.5h2M20 6.5h2M35 6.5h1M9 8.5h2M13 8.5h2M21 8.5h2M30 8.5h2M39 8.5h1M9 10.5h2M16 10.5h2M23 10.5h2M33 10.5h1M11 18.5h1M26 26.5h1M45 26.5h1M31 28.5h2M35 32.5h2M5 34.5h1M27 38.5h2M38 38.5h1" stroke="#d4d4d4" stroke-opacity="0.08" stroke-width="1"/><path d="M10 1.5h2M17 1.5h2M23 1.5h2M29 1.5h1M9 3.5h2M20 3.5h1M9 7.5h2M14 7.5h2M20 7.5h2M35 7.5h1M9 9.5h2M13 9.5h2M21 9.5h2M30 9.5h2M39 9.5h1M9 11.5h2M16 11.5h2M23 11.5h2M33 11.5h1M11 19.5h1M20 19.5h1M26 27.5h1M41 27.5h1M45 27.5h1M77 27.5h1M31 29.5h2M45 29.5h1M57 29.5h1M32 31.5h1M35 33.5h2M46 33.5h1M5 35.5h1M15 37.5h1M43 37.5h1M27 39.5h2M38 39.5h1" stroke="#d4d4d4" stroke-opacity="0.2" stroke-width="1"/><path d="M19 1.5h1M12 7.5h1M24 7.5h1M23 9.5h1M26 11.5h2M10 17.5h1M30 27.5h1M71 27.5h1M80 27.5h2M28 33.5h2M20 39.5h2M15 43.5h1" stroke="#4ec9b0" stroke-opacity="0.55" stroke-width="1"/><path d="M7 6.5h1M7 8.5h1M7 10.5h1M1 16.5h1M5 16.5h1M2 26.5h1M10 26.5h1M4 28.5h1M6 28.5h1" stroke="#569cd6" stroke-opacity="0.45" stroke-width="1"/><path d="M0 14.5h1M3 14.5h2M6 14.5h2M0 15.5h1M0 24.5h1M2 24.5h2M0 25.5h1M47 26.5h1M47 27.5h1M7 36.5h1M37 36.5h1M44 36.5h1M46 36.5h1M48 36.5h2M7 37.5h1M37 37.5h1" stroke="#d4d4d4" stroke-opacity="0.3" stroke-width="1"/><path d="M1 14.5h1M19 14.5h1M1 15.5h1M19 15.5h1M16 16.5h1M16 17.5h1M0 20.5h1M0 21.5h1M1 24.5h1M14 24.5h1M1 25.5h1M14 25.5h1M20 26.5h1M51 26.5h1M89 26.5h1M20 27.5h1M51 27.5h1M89 27.5h1M21 42.5h1M31 42.5h1M21 43.5h1M31 43.5h1M0 44.5h1M0 45.5h1" stroke="#ffd700" stroke-opacity="0.2" stroke-width="1"/><path d="M2 14.5h1M5 14.5h1M4 24.5h1M45 36.5h1M47 36.5h1" stroke="#d4d4d4" stroke-opacity="0.45" stroke-width="1"/><path d="M2 15.5h6M3 25.5h2M44 37.5h6" stroke="#d4d4d4" stroke-opacity="0.5" stroke-width="1"/><path d="M8 14.5h1M18 14.5h1M8 15.5h1M18 15.5h1M5 24.5h1M13 24.5h1M5 25.5h1M13 25.5h1M42 28.5h1M56 28.5h1M64 28.5h1M42 29.5h1M56 29.5h1M64 29.5h1M4 34.5h1M4 35.5h1M36 36.5h1M50 36.5h1M52 36.5h1M36 37.5h1M50 37.5h1M52 37.5h1M4 40.5h1M4 41.5h1M6 42.5h1M33 42.5h1M6 43.5h1M33 43.5h1" stroke="#da70d6" stroke-opacity="0.2" stroke-width="1"/><path d="M4 18.5h3M8 18.5h2M21 26.5h4M8 28.5h3M12 28.5h2M13 30.5h3M17 30.5h2M25 30.5h3M29 30.5h2M8 36.5h3M12 36.5h2M38 36.5h4M23 42.5h3M27 42.5h2" stroke="#9cdcfe" stroke-opacity="0.3" stroke-width="1"/><path d="M4 19.5h1M21 27.5h1M8 29.5h1M13 31.5h1M25 31.5h1M8 37.5h1M38 37.5h1M23 43.5h1" stroke="#9cdcfe" stroke-opacity="0.55" stroke-width="1"/><path d="M5 19.5h6M22 27.5h4M43 27.5h2M9 29.5h6M43 29.5h2M14 31.5h6M26 31.5h6M9 37.5h6M39 37.5h4M24 43.5h6" stroke="#9cdcfe" stroke-opacity="0.5" stroke-width="1"/><path d="M7 18.5h1M10 18.5h1M25 26.5h1M43 26.5h2M11 28.5h1M14 28.5h1M43 28.5h2M16 30.5h1M19 30.5h1M28 30.5h1M31 30.5h1M11 36.5h1M14 36.5h1M42 36.5h1M26 42.5h1M29 42.5h1" stroke="#9cdcfe" stroke-opacity="0.45" stroke-width="1"/><path d="M2 25.5h1" stroke="#d4d4d4" stroke-opacity="0.55" stroke-width="1"/><path d="M6 24.5h2M12 24.5h1M6 25.5h2M12 25.5h1" stroke="#ce9178" stroke-opacity="0.3" stroke-width="1"/><path d="M8 24.5h1M11 24.5h1" stroke="#ce9178" stroke-opacity="0.12" stroke-width="1"/><path d="M8 25.5h1M11 25.5h1" stroke="#ce9178" stroke-opacity="0.22" stroke-width="1"/><path d="M9 24.5h2" stroke="#ce9178" stroke-opacity="0.45" stroke-width="1"/><path d="M9 25.5h2" stroke="#ce9178" stroke-opacity="0.5" stroke-width="1"/><path d="M0 27.5h1M6 27.5h1" stroke="#569cd6" stroke-opacity="0.55" stroke-width="1"/><path d="M13 26.5h2M17 26.5h3M33 28.5h2M38 28.5h1M47 28.5h1M49 28.5h4M16 36.5h1M18 36.5h2M23 36.5h1M25 36.5h2M29 36.5h2M32 36.5h4M8 42.5h3" stroke="#dcdcaa" stroke-opacity="0.3" stroke-width="1"/><path d="M13 27.5h1M33 29.5h1M38 29.5h1" stroke="#dcdcaa" stroke-opacity="0.55" stroke-width="1"/><path d="M14 27.5h2M17 27.5h3M34 29.5h2M37 29.5h1M40 29.5h2M46 29.5h2M49 29.5h5M16 37.5h6M23 37.5h4M28 37.5h3M32 37.5h4M7 43.5h4" stroke="#dcdcaa" stroke-opacity="0.5" stroke-width="1"/><path d="M15 26.5h1M35 28.5h1M37 28.5h1M40 28.5h2M46 28.5h1M53 28.5h1M17 36.5h1M20 36.5h2M24 36.5h1M28 36.5h1M7 42.5h1" stroke="#dcdcaa" stroke-opacity="0.45" stroke-width="1"/><path d="M16 27.5h1M36 29.5h1M39 29.5h1M48 29.5h1M22 37.5h1M27 37.5h1M31 37.5h1" stroke="#dcdcaa" stroke-opacity="0.2" stroke-width="1"/><path d="M53 26.5h2M62 26.5h1M67 26.5h1M76 26.5h1M87 26.5h1M16 28.5h1M22 30.5h2M13 32.5h2" stroke="#d4d4d4" stroke-opacity="0.12" stroke-width="1"/><path d="M53 27.5h2M62 27.5h1M67 27.5h1M76 27.5h1M87 27.5h1M16 29.5h1M22 31.5h2M13 33.5h2" stroke="#d4d4d4" stroke-opacity="0.22" stroke-width="1"/><path d="M18 28.5h2M21 28.5h1M58 28.5h3M16 32.5h2M19 32.5h3M8 38.5h2M11 38.5h3" stroke="#c586c0" stroke-opacity="0.3" stroke-width="1"/><path d="M18 29.5h5M58 29.5h5M16 33.5h6M4 37.5h2M8 39.5h6" stroke="#c586c0" stroke-opacity="0.5" stroke-width="1"/><path d="M20 28.5h1M22 28.5h1M61 28.5h2M18 32.5h1M4 36.5h2M10 38.5h1" stroke="#c586c0" stroke-opacity="0.45" stroke-width="1"/><path d="M54 28.5h2M54 29.5h2M12 30.5h1M20 30.5h1M12 31.5h1M20 31.5h1M26 32.5h1M45 32.5h1M26 33.5h1M45 33.5h1M18 38.5h1M37 38.5h1M18 39.5h1M37 39.5h1M11 42.5h1M32 42.5h1M11 43.5h1M32 43.5h1" stroke="#179fff" stroke-opacity="0.2" stroke-width="1"/></svg><div class="abs" style="left:1308px;top:57px;width:14px;height:729px;border-left:1px solid #141414;border-top:1px solid #141414"></div><div class="abs" style="left:1309px;top:343px;width:13px;height:2px;background:#a0a0a0"></div></div>
<div id="status" class="abs"><svg class="abs" style="left:4px;top:2px" width="16" height="16" viewBox="0 0 16 16"><path d="M3 6.3 L7.2 10.4 L3 14.7 M12.9 2.3 L9 6.3 L12.9 10.7" stroke="#cccccc" stroke-width="1.05" stroke-linejoin="miter"/></svg><svg class="abs" style="left:37px;top:3px" width="14" height="14" viewBox="0 0 14 14"><circle cx="7.1" cy="7" r="6.5" stroke="#cccccc" stroke-width="1"/><path d="M4.7 4.6 L9.5 9.4 M9.5 4.6 L4.7 9.4" stroke="#cccccc" stroke-width="1.15"/></svg><span style="left:54.8px">0</span><svg class="abs" style="left:65px;top:3px" width="15" height="14" viewBox="0 0 15 14"><path d="M7.2 0.9 L13.7 12.4 H0.7 Z" stroke="#cccccc" stroke-width="1" stroke-linejoin="round"/><path d="M7.2 4.8 V9" stroke="#cccccc" stroke-width="1"/><circle cx="7.2" cy="10.5" r=".65" fill="#cccccc"/></svg><span style="left:83.3px">0</span><span style="left:1325px;letter-spacing:-0.13px">Ln 26, Col 1</span><span style="left:1403.5px;letter-spacing:-0.2px">Spaces: 4</span><span style="left:1469px;letter-spacing:0.7px">UTF-8</span><span style="left:1519px;letter-spacing:0.9px">LF</span><span style="left:1548.6px;letter-spacing:-1.0px">{ }</span><span style="left:1570px;letter-spacing:0px">Rust</span><svg class="abs" style="left:1609.5px;top:1.5px" width="17" height="17" viewBox="0 0 16 16"><path d="M2.6 4.2 C2.6 2.2 3.8 1.6 5.4 1.6 S8 2.4 8 4 C8 2.4 9 1.6 10.6 1.6 S13.4 2.2 13.4 4.2 V6 C14.3 6.8 15 8 15 9.5 C15 12.5 11.5 14.2 8 14.2 S1 12.5 1 9.5 C1 8 1.7 6.8 3 6 Z" fill="#cccccc"/><rect x="3.6" y="2.9" width="3.4" height="3.5" rx="1.5" fill="#181818"/><rect x="9" y="2.9" width="3.4" height="3.5" rx="1.5" fill="#181818"/><path d="M3.2 8.6 H12.8 V11.6 C11.5 12.6 9.8 13 8 13 S4.5 12.6 3.2 11.6 Z" fill="#181818"/><rect x="5.6" y="9.3" width="1.3" height="2.2" rx=".6" fill="#cccccc"/><rect x="9.1" y="9.3" width="1.3" height="2.2" rx=".6" fill="#cccccc"/></svg><svg class="abs" style="left:1642px;top:2px" width="16" height="16" viewBox="0 0 16 16"><path d="M8 1.8 C5.4 1.8 3.8 3.8 3.8 6.2 V9.5 L2.5 12 H13.5 L12.2 9.5 V6.2 C12.2 3.8 10.6 1.8 8 1.8 Z" stroke="#cccccc" stroke-width="1.1" stroke-linejoin="round"/><path d="M6.4 12.3 a1.7 1.7 0 0 0 3.2 0" stroke="#cccccc" stroke-width="1.1"/></svg></div>
</body></html>
